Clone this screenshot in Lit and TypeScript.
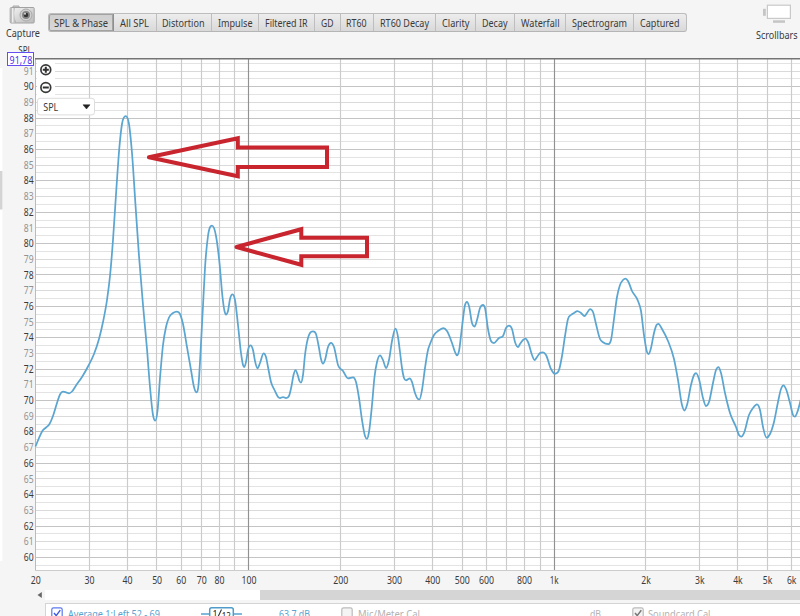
import { LitElement, html, svg, css } from "lit";
import { customElement, property, state } from "lit/decorators.js";

const FONT = css`"Noto Sans", "Open Sans", sans-serif`;

const TABS: [string, number, number][] = [
  ["SPL & Phase", 65.5, 54], ["All SPL", 42.5, 29], ["Distortion", 55, 42.5], ["Impulse", 47.5, 34.5],
  ["Filtered IR", 55.5, 42.5], ["GD", 26, 12.5], ["RT60", 33, 20.5], ["RT60 Decay", 62, 49],
  ["Clarity", 40.5, 27.5], ["Decay", 39, 25.5], ["Waterfall", 51, 38.5], ["Spectrogram", 68, 55], ["Captured", 51.5, 39.5],
];

/* Response trace, in chart pixels. */
const TRACE: [number, number][] = [
  [35.5,446.5],[39,438],[42.5,430.8],[46,427.5],[49.5,424],[53,416],[57,403],[60,394.5],[63,391.7],[66,392.3],[69,393.3],[72,391.5],[76,385.5],[82,377],[88,366.5],[94,354],[99,339],[103,322],[107,300],[110,276],[113,240],[116.5,187],[119.5,146],[122,124],[125.7,116.2],[129,124],[132,153],[135.5,205],[139,256],[143,305],[147,349],[150,387],[153,415],[155.3,420.7],[157.5,411],[160,378],[163,345],[166,327],[169,317.5],[173,313],[177,311.6],[180,314],[183,324],[187,347],[191,370],[194,387],[196.3,392.3],[198.5,385],[200,362],[203.5,296],[205,268],[208,236],[212,225.7],[216,236],[219.5,263],[222.5,297],[224.5,311],[226,314.5],[228,311],[230,299],[232.5,294.3],[235,300],[238,325],[241,353],[243,365],[244.3,367],[246,362],[248,350],[250.5,345.3],[253,350],[255,361],[257.5,368.3],[260,363],[263.5,353.3],[266,357],[268,367],[271,382],[274.5,390],[278,396.8],[280,398],[283,397],[286,398],[289,396],[291.5,386],[293.5,375],[295.5,370],[298,376],[299.5,381],[301,382.5],[303,375],[305,355],[308,338],[310,333],[313,331.3],[316,334],[319,348],[321,359],[323,363.7],[325,360],[328,347],[331,342.9],[334,347],[338,365],[343,371],[348,378.3],[353,377.3],[356,382],[359,398],[362,420],[365,436],[367,438.8],[369,432],[372,405],[374.5,377],[377,362],[380,355.3],[383,360],[386,368],[389,360],[392,341],[395.5,328.7],[398,337],[400,352],[402,368],[404,378],[406,380.3],[410,378.3],[412,382],[415,393],[418,399],[419.5,399.3],[422,390],[425,368],[428,350],[430,344],[434,335],[438,331],[443.5,328],[447,331],[452,343],[455,352],[457,355.3],[459,351],[462,327],[465,305],[467,301.8],[469,306],[472,323],[474.5,326.5],[477,320],[480,308],[483,304.8],[485,308],[488,329],[491,341],[494,343],[499,338],[503,336],[506,328],[509,325.6],[512,329],[515,342],[518,347],[520,344],[523,340],[525.5,338.6],[528,342],[532,355],[534.5,360],[537,357],[540,353],[543,352.3],[546,355],[551,369],[555,373.8],[559,370],[562,356],[565,336],[568,319],[571,315],[574,313],[577.5,311],[581,313],[584.5,316],[587,313],[590,309],[593,312],[596,324],[600,339],[603,342.3],[608.5,344],[611,340],[614,319],[617,297],[620,285],[623,280],[625.5,278.6],[628,281],[632,291],[638,301],[641,311],[644,335],[647,352],[648.7,354],[651,348],[654,333],[656.5,325],[658.5,323.8],[662,329],[668,341],[674,359],[678,380],[682,405],[684.5,410.5],[687,405],[691,385],[694,375],[696,373],[699,379],[703,398],[706,406],[709,402],[713,383],[716,370],[718.5,367],[721,373],[725,393],[730,413],[736,427],[739,435],[741.5,436.7],[744,433],[749,415],[753,408],[757,404.3],[760,410],[763,427],[766.5,437.7],[770,434],[774,422],[778,402],[781,389],[783.5,385.3],[786,389],[790,403],[793,415],[795,416.7],[797,413],[801,399],
];

/* Cubic interpolation with parabolic slopes, limited so that peaks and dips stay on their points. */
function smooth(p: [number, number][]): string {
  const s = p.slice(1).map((q, i) => (q[1] - p[i][1]) / (q[0] - p[i][0]));
  const m = p.map((_, i) => {
    if (i === 0) return s[0];
    if (i === p.length - 1) return s[i - 1];
    const a = s[i - 1], b = s[i];
    if (a * b <= 0) return 0;
    const h0 = p[i][0] - p[i - 1][0], h1 = p[i + 1][0] - p[i][0];
    const v = (a * h1 + b * h0) / (h0 + h1);
    return Math.sign(v) * Math.min(Math.abs(v), 3 * Math.abs(a), 3 * Math.abs(b));
  });
  let d = `M${p[0][0]} ${p[0][1]}`;
  for (let i = 1; i < p.length; i++) {
    const h = (p[i][0] - p[i - 1][0]) / 3;
    d += `C${(p[i - 1][0] + h).toFixed(2)} ${(p[i - 1][1] + h * m[i - 1]).toFixed(2)} ${(p[i][0] - h).toFixed(2)} ${(p[i][1] - h * m[i]).toFixed(2)} ${p[i][0]} ${p[i][1]}`;
  }
  return d;
}

const fx = (f: number) => 554 + 305.2 * Math.log10(f / 1000);
const dy = (db: number) => 557.4 - (db - 60) * 15.69;
const FREQS = [30,40,50,60,70,80,90,100,200,300,400,500,600,700,800,900,1000,2000,3000,4000,5000,6000];
const FREQ_LABELS: [number, string, number][] = [
  [20,"20",10],[30,"30",10],[40,"40",10],[50,"50",10],[60,"60",10],[70,"70",10],[80,"80",10],[100,"100",15],[200,"200",15],[300,"300",15],
  [400,"400",15],[500,"500",15],[600,"600",15],[800,"800",15],[1000,"1k",9],[2000,"2k",9.5],[3000,"3k",9.5],[4000,"4k",9.5],[5000,"5k",9.5],[6000,"6k",9.5],
];

@customElement("fit-text")
class FitText extends LitElement {
  @property() text = "";
  @property({ type: Number }) w = 40;
  static styles = css`
    :host { display: block; height: 16px; }
    svg { display: block; overflow: visible; }
    text { font: 10.3px ${FONT}; fill: currentColor; }
  `;
  render() {
    return html`<svg width=${this.w} height="16"><text x="0" y="12" textLength=${this.w} lengthAdjust="spacingAndGlyphs">${this.text}</text></svg>`;
  }
}

@customElement("spl-chart")
class SplChart extends LitElement {
  static styles = css`
    :host { display: block; height: 544px; }
    svg { display: block; }
    text { font: 10.3px ${FONT}; fill: #3a3a3a; }
    .even { stroke: #c4c4c4; }
    .odd { stroke: #dadada; }
    .half { stroke: #e3e3e3; }
    .v { stroke: #cbcbcb; stroke-width: 1.15; }
    .decade { stroke: #919191; stroke-width: 1.15; }
    .dim { fill: #929292; }
    .trace { fill: none; stroke: #5ba5d1; stroke-width: 1.75; stroke-linejoin: round; }
    .arrow { fill: none; stroke: #c9252f; stroke-width: 4; }
    .limit { fill: #4b32ef; font-size: 10.5px; }
    .menu { fill: #fff; stroke: #ddd; }
    .zoom { fill: #fff; stroke: #383838; stroke-width: 1.7; }
    .sign { stroke: #303030; stroke-width: 2; }
  `;
  render() {
    const rows = Array.from({ length: 65 }, (_, i) => 59.5 + i / 2);
    const snap = (v: number) => Math.floor(v) + 0.5;
    return html`<svg width="800" height="544" viewBox="0 46 800 544">
      <rect x="0" y="68" width="2.4" height="493" fill="#fff" />
      <rect x="0" y="171" width="2.4" height="38.5" fill="#d4d4d4" />
      <text x="18.3" y="53.6" textLength="13.5" lengthAdjust="spacingAndGlyphs">SPL</text>
      <rect x="35" y="58" width="765" height="513" fill="#fff" />
      ${rows.map((r) => svg`<line x1="36" x2="800" y1=${snap(dy(r))} y2=${snap(dy(r))} class=${r % 2 === 0 ? "even" : r % 1 === 0 ? "odd" : "half"} />`)}
      ${FREQS.map((f) => svg`<line y1="59" y2="570" x1=${snap(fx(f))} x2=${snap(fx(f))} class=${f === 100 || f === 1000 ? "decade" : "v"} />`)}
      <path d="M35.5 59V571" stroke="#bbb" /><path d="M35 570.5H800" stroke="#ccc" />
      <path d="M35 58.8H800" stroke="#747474" stroke-width="1.4" />
      ${Array.from({ length: 32 }, (_, i) => 60 + i).map((d) => svg`<text x="23.8" y=${dy(d) + 3.6} textLength="9.8" lengthAdjust="spacingAndGlyphs" class=${d % 2 ? "dim" : ""}>${d}</text>`)}
      ${FREQ_LABELS.map(([f, t, w]) => svg`<text x=${fx(f) + 0.2 - w / 2} y="584.3" textLength=${w} lengthAdjust="spacingAndGlyphs">${t}</text>`)}
      <rect x="7.5" y="52.5" width="26" height="13" fill="#fff" stroke="#6450f0" />
      <text class="limit" x="9.6" y="63.7" textLength="22.6" lengthAdjust="spacingAndGlyphs">91,78</text>
      <rect x="37" y="61" width="18" height="34" fill="#fff" />
      <circle class="zoom" cx="45.8" cy="69.7" r="4.9" /><path class="sign" d="M42.8 69.7H48.8M45.8 66.7V72.7" />
      <circle class="zoom" cx="45.8" cy="87.5" r="4.9" /><path class="sign" d="M42.8 87.5H48.8" />
      <path class="trace" d=${smooth(TRACE)} />
      <rect class="menu" x="37.5" y="98.3" width="57" height="16.6" rx="2.5" />
      <text x="43.3" y="110.6" textLength="15" lengthAdjust="spacingAndGlyphs">SPL</text>
      <path d="M83 104.8H90L86.5 109Z" fill="#222" stroke="#222" stroke-width=".5" />
      <path class="arrow" d="M237.8 157" />
      <path class="arrow" d="M149 157.3L237.8 138.3V147.5H327V167H237.8V176.3L149 157.3" stroke-linecap="round" />
      <path class="arrow" d="M236.5 247L301.3 229.2V237.7H367V256.3H301.3V264.8L236.5 247" stroke-linecap="round" />
    </svg>`;
  }
}

@customElement("app-root")
class AppRoot extends LitElement {
  @state() private active = 0;
  static styles = css`
    :host { display: flex; flex-direction: column; width: 800px; height: 616px; overflow: hidden; background: #f5f5f5; color: #3a3a3a; font: 10px ${FONT}; }
    header { height: 46px; flex: none; display: flex; align-items: flex-start; }
    .capture { width: 47.5px; box-sizing: border-box; padding: 4px 0 0 6px; }
    .capture svg { display: block; margin: 0 0 -1px 3px; }
    .tabs { display: flex; height: 19px; box-sizing: border-box; margin-top: 13.4px; border: 1px solid #bdbdbd; border-bottom: 1.5px solid #b5b5b5; border-radius: 3px; background: linear-gradient(#ededed, #d9d9d9); }
    .tab { box-sizing: border-box; display: flex; justify-content: center; align-items: center; border-right: 1px solid #bebebe; cursor: default; }
    .tab:last-child { border-right: 0; }
    .tab.on { background: linear-gradient(#cfcfcf, #d9d9d9); box-shadow: inset 0 0 0 1px #a2a2a2; border-right-color: #8f8f8f; border-radius: 2px 0 0 2px; }
    .bars { margin-left: auto; padding: 4px 2.5px 0 0; }
    .bars svg { display: block; margin: 0 0 3px 6px; }
    .scroll { display: flex; align-items: center; height: 10px; flex: none; padding-left: 36px; }
    .scroll svg { width: 9px; height: 10px; }
    .track { flex: 1; height: 10px; background: #fff; display: flex; justify-content: flex-end; }
    .thumb { width: 540.5px; background: #d5d5d5; }
    .legend { margin: 3px 0 0 45px; height: 20px; border: 1px solid #d4d4d4; border-right: 0; background: #fff; display: flex; padding-left: 5px; align-items: flex-start; }
    .legend svg { flex: none; margin-top: 3px; }
    .legend fit-text { margin-top: 1.8px; }
    .blue { color: #5aa3cf; } .grey { color: #b3b3b3; }
    .name { margin-left: 5px; } .smooth { margin-left: 41px; } .level { margin-left: 37px; }
    .box2 { margin-left: 31px; } .mic { margin-left: 4.5px; } .db { margin-left: 170px; } .box3 { margin-left: 31px; } .card { margin-left: 4.5px; }
  `;
  render() {
    return html`
      <header>
        <div class="capture">
          <svg width="27" height="22" viewBox="0 0 27 22">
            <defs><linearGradient id="b" x2="1" y2="1"><stop offset="0" stop-color="#f4f4f4" /><stop offset="1" stop-color="#bababa" /></linearGradient>
            <linearGradient id="g"><stop offset="0" stop-color="#a9a9a9" /><stop offset=".3" stop-color="#eee" /><stop offset="1" stop-color="#999" /></linearGradient></defs>
            <path d="M4 3V2H10V3" fill="#ccc" stroke="#aaa" />
            <rect x="1.2" y="3.5" width="24" height="15.5" rx="1" fill="url(#b)" stroke="#a2a2a2" />
            <path d="M2 4H6Q4 11 7 18.5H2Z" fill="url(#g)" /><rect x="12" y="4.5" width="9" height="2" fill="#e9e9e9" />
            <circle cx="17" cy="11" r="6" fill="#d0d0d0" stroke="#aaa" /><circle cx="17" cy="11" r="4" fill="#858585" /><circle cx="17" cy="11" r="2.3" fill="#353535" /><circle cx="16" cy="9.8" r="1" fill="#ddd" />
          </svg>
          <fit-text text="Capture" w="34"></fit-text>
        </div>
        <div class="tabs">${TABS.map(([t, w, tw], i) => html`<div class="tab ${i === this.active ? "on" : ""}" style="width:${w}px" @click=${() => (this.active = i)}><fit-text .text=${t} .w=${tw}></fit-text></div>`)}</div>
        <div class="bars">
          <svg width="32" height="20" viewBox="0 0 32 20"><rect x="1" y="4.8" width="2.8" height="7" fill="#c5c5c5" /><rect x="5.4" y="1.2" width="23" height="13.2" fill="#fff" stroke="#c9c9c9" stroke-width="1.2" /><rect x="11" y="16.3" width="12" height="2.5" fill="#c5c5c5" /></svg>
          <fit-text text="Scrollbars" w="41.5"></fit-text>
        </div>
      </header>
      <spl-chart></spl-chart>
      <div class="scroll"><svg viewBox="0 0 9 10"><path d="M5.8 2V8L1.5 5Z" fill="#666" /></svg><div class="track"><div class="thumb"></div></div></div>
      <div class="legend">
        <svg width="12" height="12" viewBox="0 0 12 12"><rect x=".8" y=".8" width="10.4" height="10.4" rx="1.8" fill="#fff" stroke="#5b78ee" stroke-width="1.2" /><path d="M3 6L5.2 8.6L9.3 3.2" fill="none" stroke="#3a59df" stroke-width="1.4" /></svg>
        <fit-text class="blue name" text="Average 1:Left 52 - 69" w="92"></fit-text>
        <svg class="smooth" width="41" height="14" viewBox="0 0 41 14"><path d="M0 7H9M32 7H41" stroke="#5aa3cf" stroke-width="1.4" /><rect x="8.7" y=".8" width="23.6" height="14" rx="2" fill="#fff" stroke="#4f9bc9" stroke-width="1.5" /><text x="11.5" y="10" font-size="9" fill="#222">1</text><path d="M16 12L20.5 2.5" stroke="#333" stroke-width="1.1" /><text x="20.8" y="12" font-size="8" fill="#222">12</text></svg>
        <fit-text class="blue level" text="63,7 dB" w="31"></fit-text>
        <svg class="box2" width="12" height="12" viewBox="0 0 12 12"><rect x=".8" y=".8" width="10.4" height="10.4" rx="1.8" fill="#f4f4f4" stroke="#bbb" stroke-width="1.2" /></svg>
        <fit-text class="grey mic" text="Mic/Meter Cal" w="62"></fit-text>
        <fit-text class="grey db" text="dB" w="11"></fit-text>
        <svg class="box3" width="12" height="12" viewBox="0 0 12 12"><rect x=".8" y=".8" width="10.4" height="10.4" rx="1.8" fill="#f4f4f4" stroke="#bbb" stroke-width="1.2" /><path d="M3 6L5.2 8.6L9.3 3.2" fill="none" stroke="#777" stroke-width="1.5" /></svg>
        <fit-text class="grey card" text="Soundcard Cal" w="62.5"></fit-text>
      </div>`;
  }
}
